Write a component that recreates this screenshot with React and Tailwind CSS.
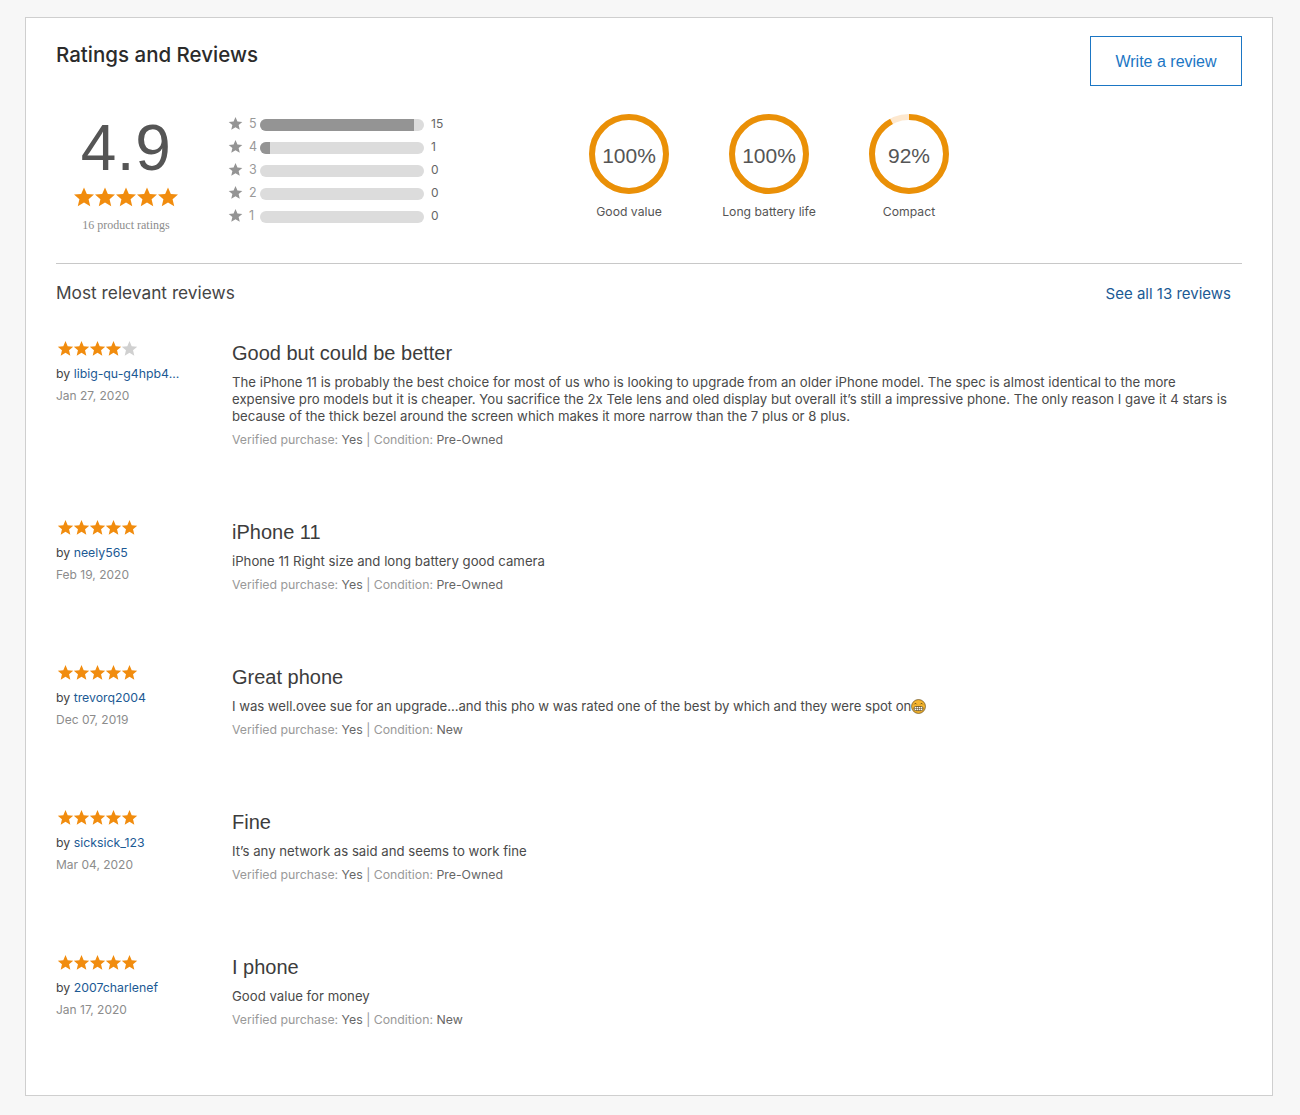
const STAR = "M12 1.5l3.1 7.2 7.8.7-5.9 5.1 1.8 7.6L12 18.1l-6.8 4 1.8-7.6-5.9-5.1 7.8-.7z";

function Star({ size, color }) {
  return (
    <svg width={size} height={size} viewBox="0 0 24 24" className="block shrink-0">
      <path d={STAR} fill={color} />
    </svg>
  );
}

function Stars({ n = 5, size = 17, step = 16 }) {
  return (
    <div className="flex" style={{ width: step * 5 }}>
      {[0, 1, 2, 3, 4].map((i) => (
        <div key={i} className="flex justify-center" style={{ width: step }}>
          <Star size={size} color={i < n ? "#f18c0e" : "#d0d0d0"} />
        </div>
      ))}
    </div>
  );
}

function Bar({ star, count, pct }) {
  return (
    <div className="flex items-center h-[23px]">
      <div className="mb-[2px]"><Star size={15} color="#949494" /></div>
      <span className="w-[16px] pl-[6px] text-[12.5px] text-[#999] leading-none">{star}</span>
      <div className="ml-[1px] w-[164px] h-[12px] rounded-full bg-[#dcdcdc] overflow-hidden">
        <div className="h-full bg-[#949494]" style={{ width: pct }} />
      </div>
      <span className="ml-[7px] mb-[1px] text-[12px] text-[#666] leading-none">{count}</span>
    </div>
  );
}

function Ring({ pct, label }) {
  const r = 37;
  const c = 2 * Math.PI * r;
  return (
    <div className="w-[140px] flex flex-col items-center">
      <div className="relative w-[80px] h-[80px]">
        <svg width="80" height="80" viewBox="0 0 80 80" className="block -rotate-90">
          <circle cx="40" cy="40" r={r} fill="none" stroke="#fde8cf" strokeWidth="6" />
          <circle cx="40" cy="40" r={r} fill="none" stroke="#ea9007" strokeWidth="6" strokeDasharray={`${(c * pct) / 100} ${c}`} />
        </svg>
        <div className="absolute inset-0 pt-[3px] flex items-center justify-center font-['Liberation_Sans',sans-serif] text-[21px] text-[#555]">{pct}%</div>
      </div>
      <div className="mt-[10px] text-[12.2px] leading-[16px] text-[#555]">{label}</div>
    </div>
  );
}

function Emoji() {
  return (
    <svg width="15" height="15" viewBox="0 0 16 16" className="inline-block align-[-3px]">
      <circle cx="8" cy="8" r="7.4" fill="#f5b52e" stroke="#6b5220" strokeWidth="0.8" />
      <path d="M3.5 5.6c.6-1 1.9-1 2.5 0M10 5.6c.6-1 1.9-1 2.5 0" fill="none" stroke="#5a4518" strokeWidth="1" />
      <rect x="3.2" y="8" width="9.6" height="4.4" rx="1.8" fill="#fff" stroke="#5a4518" strokeWidth="0.8" />
      <path d="M3.2 10.2h9.6M6 8v4.4M8 8v4.4M10 8v4.4" stroke="#5a4518" strokeWidth="0.6" />
    </svg>
  );
}

function Review({ n = 5, user, date, title, children, condition, height }) {
  return (
    <div className="flex" style={{ height }}>
      <div className="w-[176px] shrink-0 pt-[2px]">
        <div className="pl-[1px]"><Stars n={n} /></div>
        <div className="mt-[8px] text-[12.3px] leading-[17px] text-[#444]">by <span className="text-[#1c5a94]">{user}</span></div>
        <div className="mt-[5px] text-[12px] leading-[17px] text-[#8c8c8c]">{date}</div>
      </div>
      <div className="min-w-0 flex-1 pt-[3px] pr-[10px]">
        <h3 className="font-['Liberation_Sans',sans-serif] text-[20px] leading-[24px] text-[#3c3c3c]">{title}</h3>
        <div className="mt-[9px] text-[13.2px] leading-[17px] text-[#4a4a4a]">{children}</div>
        <div className="mt-[6px] text-[12.3px] leading-[17px] text-[#999]">
          Verified purchase: <span className="text-[#666]">Yes</span> | Condition: <span className="text-[#666]">{condition}</span>
        </div>
      </div>
    </div>
  );
}

export default function App() {
  return (
    <div className="min-h-[1115px] bg-[#f7f7f7] pl-[25px] pr-[27px] pt-[17px] font-['Inter',sans-serif]">
      <div className="h-[1079px] bg-white border border-[#cfcfcf] px-[30px] pt-[18px]">
        <div className="flex justify-between">
          <h2 className="mt-[6px] text-[20.5px] leading-[25px] font-medium text-[#2b2b2b]">Ratings and Reviews</h2>
          <button className="w-[152px] h-[50px] pt-[1px] border border-[#1b76c4] text-[#1b76c4] font-['Liberation_Sans',sans-serif] text-[16px]">Write a review</button>
        </div>

        <div className="flex mt-[25px] h-[152px]">
          <div className="w-[140px] flex flex-col items-center pt-[4px]">
            <div className="font-['Liberation_Sans',sans-serif] text-[64px] leading-[66px] text-[#555] tracking-[0.5px]">4.9</div>
            <div className="mt-[5px]"><Stars size={22} step={21} /></div>
            <div className="mt-[9px] font-['Liberation_Serif',serif] text-[12px] leading-[16px] text-[#8c8c8c]">16 product ratings</div>
          </div>
          <div className="ml-[32px] w-[290px] pt-[2px]">
            <Bar star="5" count="15" pct="94%" />
            <Bar star="4" count="1" pct="6%" />
            <Bar star="3" count="0" pct="0%" />
            <Bar star="2" count="0" pct="0%" />
            <Bar star="1" count="0" pct="0%" />
          </div>
          <div className="ml-[41px] flex pt-[3px]">
            <Ring pct={100} label="Good value" />
            <Ring pct={100} label="Long battery life" />
            <Ring pct={92} label="Compact" />
          </div>
        </div>

        <div className="border-t border-[#c8c8c8] flex justify-between items-start pt-[17px] pr-[11px]">
          <span className="mt-[1px] text-[17.3px] leading-[22px] text-[#444]">Most relevant reviews</span>
          <span className="mt-[2px] text-[15px] leading-[22px] text-[#1c5a94]">See all 13 reviews</span>
        </div>

        <div className="mt-[33px]">
          <Review n={4} user="libig-qu-g4hpb4..." date="Jan 27, 2020" title="Good but could be better" condition="Pre-Owned" height={179}>
            The iPhone 11 is probably the best choice for most of us who is looking to upgrade from an older iPhone model. The spec is almost identical to the more expensive pro models but it is cheaper. You sacrifice the 2x Tele lens and oled display but overall it’s still a impressive phone. The only reason I gave it 4 stars is because of the thick bezel around the screen which makes it more narrow than the 7 plus or 8 plus.
          </Review>
          <Review user="neely565" date="Feb 19, 2020" title="iPhone 11" condition="Pre-Owned" height={145}>
            iPhone 11 Right size and long battery good camera
          </Review>
          <Review user="trevorq2004" date="Dec 07, 2019" title="Great phone" condition="New" height={145}>
            <span className="tracking-[-0.045px]">I was well.ovee sue for an upgrade...and this pho w was rated one of the best by which and they were spot on</span><Emoji />
          </Review>
          <Review user="sicksick_123" date="Mar 04, 2020" title="Fine" condition="Pre-Owned" height={145}>
            It’s any network as said and seems to work fine
          </Review>
          <Review user="2007charlenef" date="Jan 17, 2020" title="I phone" condition="New" height={145}>
            Good value for money
          </Review>
        </div>
      </div>
    </div>
  );
}
